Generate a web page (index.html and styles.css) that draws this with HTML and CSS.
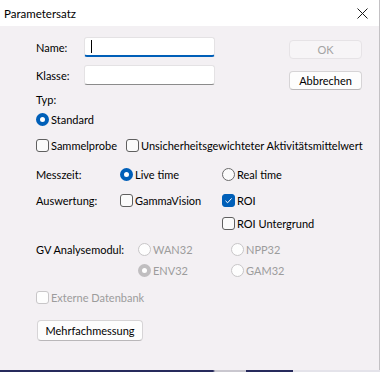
FILE: index.html
```html
<!DOCTYPE html>
<html lang="de">
<head>
<meta charset="utf-8">
<title>Parametersatz</title>
<link rel="stylesheet" href="styles.css">
</head>
<body>
<div class="window">
  <header class="titlebar">
    <span class="title">Parametersatz</span>
    <svg class="close" width="11" height="11" viewBox="0 0 11 11"><path d="M0.5 0.5L10.5 10.5M10.5 0.5L0.5 10.5" stroke="#1a1a1a" stroke-width="1"/></svg>
  </header>
  <main class="content">
    <section class="top">
      <div class="fields">
        <div class="field">
          <span class="label">Name:</span>
          <div class="input is-focused"><span class="caret"></span></div>
        </div>
        <div class="field field-2">
          <span class="label">Klasse:</span>
          <div class="input"></div>
        </div>
      </div>
      <div class="actions">
        <button class="btn btn-ok" disabled>OK</button>
        <button class="btn btn-cancel">Abbrechen</button>
      </div>
    </section>

    <div class="row r-typ">Typ:</div>
    <div class="row r-std"><span class="opt"><span class="radio checked"></span>Standard</span></div>
    <div class="row r-chk">
      <span class="opt w-90"><span class="check"></span>Sammelprobe</span>
      <span class="opt"><span class="check"></span>Unsicherheitsgewichteter Aktivitätsmittelwert</span>
    </div>
    <div class="row r-mess">
      <span class="label-col">Messzeit:</span>
      <span class="opt col-a"><span class="radio checked"></span>Live time</span>
      <span class="opt"><span class="radio"></span>Real time</span>
    </div>
    <div class="row r-ausw">
      <span class="label-col">Auswertung:</span>
      <span class="opt col-a"><span class="check"></span>GammaVision</span>
      <span class="opt"><span class="check checked"><svg width="11" height="11" viewBox="0 0 11 11"><path d="M2.5 5.8L4.6 7.8L8.6 3.4" fill="none" stroke="#fff" stroke-width="1"/></svg></span>ROI</span>
    </div>
    <div class="row r-roiu">
      <span class="opt"><span class="check"></span>ROI Untergrund</span>
    </div>
    <div class="row r-gv">
      <span class="label-gv">GV Analysemodul:</span>
      <span class="opt col-b disabled"><span class="radio"></span>WAN32</span>
      <span class="opt disabled"><span class="radio"></span>NPP32</span>
    </div>
    <div class="row r-env">
      <span class="opt col-b disabled"><span class="radio checked"></span>ENV32</span>
      <span class="opt disabled"><span class="radio"></span>GAM32</span>
    </div>
    <div class="row r-ext">
      <span class="opt disabled"><span class="check"></span>Externe Datenbank</span>
    </div>
    <div class="r-btn">
      <button class="btn btn-multi">Mehrfachmessung</button>
    </div>
  </main>
</div>
</body>
</html>
```
FILE: styles.css
```css
* { box-sizing: border-box; }
html, body { margin: 0; padding: 0; }
body {
  width: 380px;
  height: 372px;
  overflow: hidden;
  font-family: Lato, "Noto Sans", sans-serif;
  font-size: 11px;
  color: #000;
  background: linear-gradient(to right, #262a5c 0, #262a5c 213px, #c9c7cf 215px, #c9c7cf 246px, #262a5c 246px, #262a5c 293px, #e4e3ea 293px);
}
.window {
  width: 380px;
  height: 370px;
  background: #f3f0f3;
  border-right: 1px solid #c3c1c4;
  display: flex;
  flex-direction: column;
}
.titlebar {
  height: 26px;
  flex: none;
  background: #fff;
  display: flex;
  align-items: center;
  justify-content: space-between;
  padding: 0 11px 0 4px;
}
.title { font-size: 11.5px; }
.close { display: block; margin-top: 1px; }

.content { padding-left: 36px; }

.top { display: flex; height: 64px; }
.fields { width: 253px; padding-top: 11px; }
.field { display: flex; align-items: center; height: 20px; }
.field-2 { margin-top: 8px; }
.label { width: 48px; }
.input {
  width: 131px;
  height: 20px;
  background: #fff;
  border: 1px solid #e4e2e4;
  border-bottom: 1px solid #8b8b8b;
  border-radius: 3px;
  display: flex;
  align-items: center;
}
.input.is-focused { border-bottom: 2px solid #005fb8; }
.caret { width: 1px; height: 13px; background: #000; margin-left: 6px; }

.actions { padding-top: 14px; display: flex; flex-direction: column; gap: 12px; }
.btn {
  font: inherit;
  color: #000;
  background: #fdfdfd;
  border: 1px solid #d6d4d6;
  border-bottom-color: #b9b7b9;
  border-radius: 4px;
  padding: 0;
  width: 73px;
  height: 20px;
  line-height: 17px;
}
.btn-ok {
  height: 21px;
  background: #f7f5f7;
  border-color: #e6e3e6;
  color: #a3a3a3;
}
.btn-multi { width: 106px; height: 21px; margin-left: 1px; }

.row { display: flex; align-items: center; height: 16px; }
.r-typ { margin-top: 1px; }
.r-std { margin-top: 4px; }
.r-chk { margin-top: 10px; }
.r-mess { margin-top: 13px; }
.r-ausw { margin-top: 10px; }
.r-roiu { margin-top: 7px; padding-left: 186px; }
.r-gv { margin-top: 10px; }
.r-env { margin-top: 5px; padding-left: 102px; }
.r-ext { margin-top: 11px; }
.r-btn { margin-top: 15px; }

.label-col { width: 84px; }
.label-gv { width: 102px; }
.col-a { width: 102px; }
.col-b { width: 93px; }
.w-90 { width: 90px; }

.opt { display: flex; align-items: center; white-space: nowrap; }
.opt.disabled { color: #9c9c9c; }

.check, .radio {
  flex: none;
  width: 13px;
  height: 13px;
  margin-right: 2px;
  background: #fbfbfb;
  border: 1px solid #5f5f5f;
}
.check { border-radius: 3px; display: flex; align-items: center; justify-content: center; }
.check.checked { background: #005fb8; border-color: #005fb8; }
.radio { border-radius: 50%; border-color: #6a6a6a; }
.radio.checked { background: #fff; border: 4px solid #005fb8; }
.disabled .check, .disabled .radio { border-color: #c8c6c8; background: #fdfdfd; }
.disabled .radio.checked { border: 4px solid #c0bec0; background: #fff; }
```
